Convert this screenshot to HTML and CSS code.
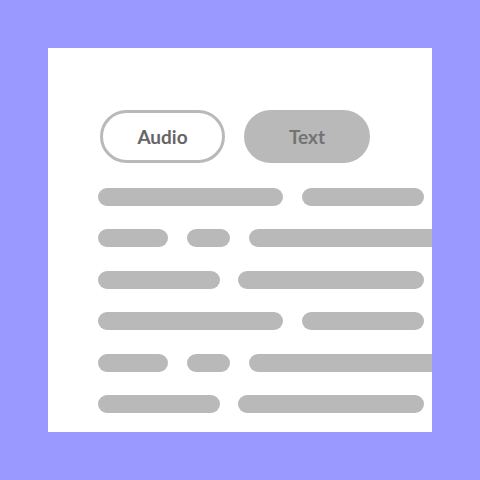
FILE: index.html
```html
<!DOCTYPE html>
<html>
<head>
<meta charset="utf-8">
<link rel="stylesheet" href="styles.css">
</head>
<body>
<div class="card">
  <div class="tabs">
    <div class="tab tab-outline">Audio</div>
    <div class="tab tab-filled">Text</div>
  </div>
  <div class="lines">
    <div class="row"><span class="bar w185"></span><span class="bar w122"></span></div>
    <div class="row"><span class="bar w70"></span><span class="bar w43"></span><span class="bar w200"></span></div>
    <div class="row row-b"><span class="bar w122"></span><span class="bar w186"></span></div>
    <div class="row"><span class="bar w185"></span><span class="bar w122"></span></div>
    <div class="row"><span class="bar w70"></span><span class="bar w43"></span><span class="bar w200"></span></div>
    <div class="row row-b"><span class="bar w122"></span><span class="bar w186"></span></div>
  </div>
</div>
</body>
</html>
```
FILE: styles.css
```css
html, body {
  margin: 0;
  padding: 0;
  width: 480px;
  height: 480px;
  background: #9999ff;
  overflow: hidden;
}
body {
  padding: 48px;
  box-sizing: border-box;
  font-family: "Lato", "Liberation Sans", sans-serif;
}
.card {
  width: 384px;
  height: 384px;
  background: #ffffff;
  overflow: hidden;
  padding: 62px 0 0 50px;
  box-sizing: border-box;
}
.tabs {
  display: flex;
  gap: 19px;
  padding-left: 2px;
}
.tab {
  height: 53px;
  border-radius: 27px;
  box-sizing: border-box;
  display: flex;
  align-items: center;
  justify-content: center;
  font-size: 19px;
  font-weight: 700;
}
.tab-outline {
  width: 125px;
  border: 3px solid #b9b9b9;
  color: #666666;
}
.tab-filled {
  width: 126px;
  background: #b9b9b9;
  color: #737373;
}
.lines {
  margin-top: 25px;
  display: flex;
  flex-direction: column;
  gap: 23.4px;
}
.row {
  display: flex;
  gap: 19px;
  height: 18px;
  white-space: nowrap;
}
.row-b {
  gap: 18px;
}
.bar {
  display: block;
  flex: none;
  height: 18px;
  border-radius: 9px;
  background: #b9b9b9;
}
.w185 { width: 185px; }
.w122 { width: 122px; }
.w70 { width: 70px; }
.w43 { width: 43px; }
.w200 { width: 200px; }
.w186 { width: 186px; }
```
